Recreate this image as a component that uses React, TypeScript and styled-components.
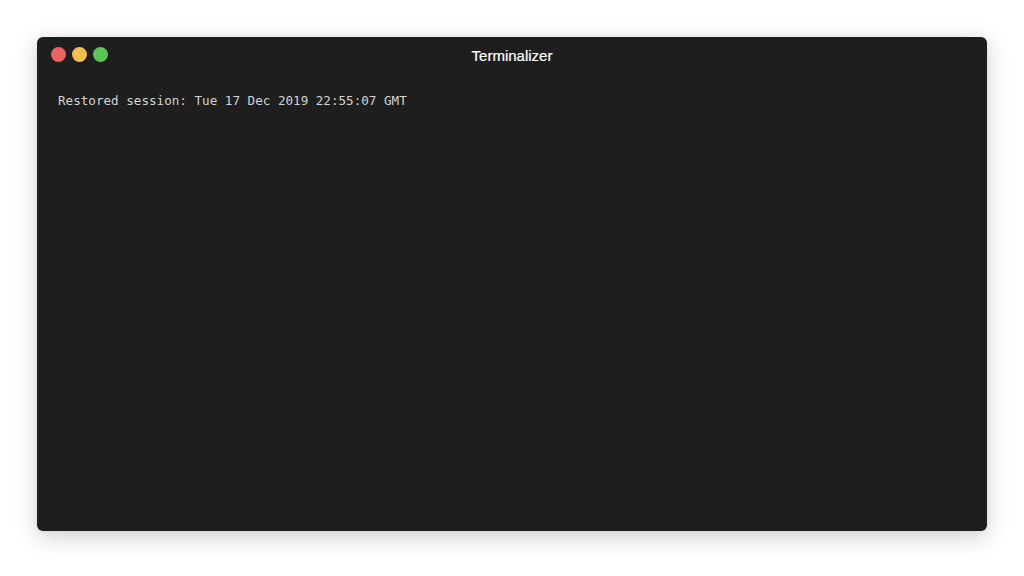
import React from "react";
import styled, {createGlobalStyle} from "styled-components";

const Global = createGlobalStyle`
  html, body {
    margin: 0;
    padding: 0;
    background: #ffffff;
  }
`;

function App() {
  const dots = ["#ea6461", "#f4bd55", "#5dc45a"];

  return (
    <Page>
      <Global />
      <Window>
        <TitleBar>
          <Dots>
            {dots.map((c) => (
              <Dot key={c} color={c} />
            ))}
          </Dots>
          <Title>Terminalizer</Title>
        </TitleBar>
        <Body>
          <Line>Restored session: Tue 17 Dec 2019 22:55:07 GMT</Line>
        </Body>
      </Window>
    </Page>
  );
}

export default App;

const Page = styled.div`
  width: 1024px;
  height: 576px;
  box-sizing: border-box;
  padding: 37px 37px 45px 37px;
  background: #ffffff;
`;

const Window = styled.div`
  width: 950px;
  height: 494px;
  background: #1e1e1e;
  border-radius: 6px;
  box-shadow: 0 6px 24px rgba(0, 0, 0, 0.18), 0 0 6px rgba(0, 0, 0, 0.06);
  display: flex;
  flex-direction: column;
`;

const TitleBar = styled.div`
  position: relative;
  height: 35px;
  display: flex;
  align-items: center;
  justify-content: center;
`;

const Dots = styled.div`
  position: absolute;
  left: 14px;
  top: 10px;
  display: flex;
  gap: 6px;
`;

const Dot = styled.div<{color: string}>`
  width: 15px;
  height: 15px;
  border-radius: 50%;
  background: ${(p) => p.color};
`;

const Title = styled.div`
  color: #ffffff;
  font-family: "Liberation Sans", Arial, sans-serif;
  font-size: 15px;
  margin-top: 2px;
  -webkit-text-stroke: 0.2px #ffffff;
`;

const Body = styled.div`
  padding: 21px 21px;
`;

const Line = styled.div`
  color: #d2d2d2;
  font-family: "DejaVu Sans Mono", monospace;
  font-size: 12.6px;
  line-height: 16px;
`;
